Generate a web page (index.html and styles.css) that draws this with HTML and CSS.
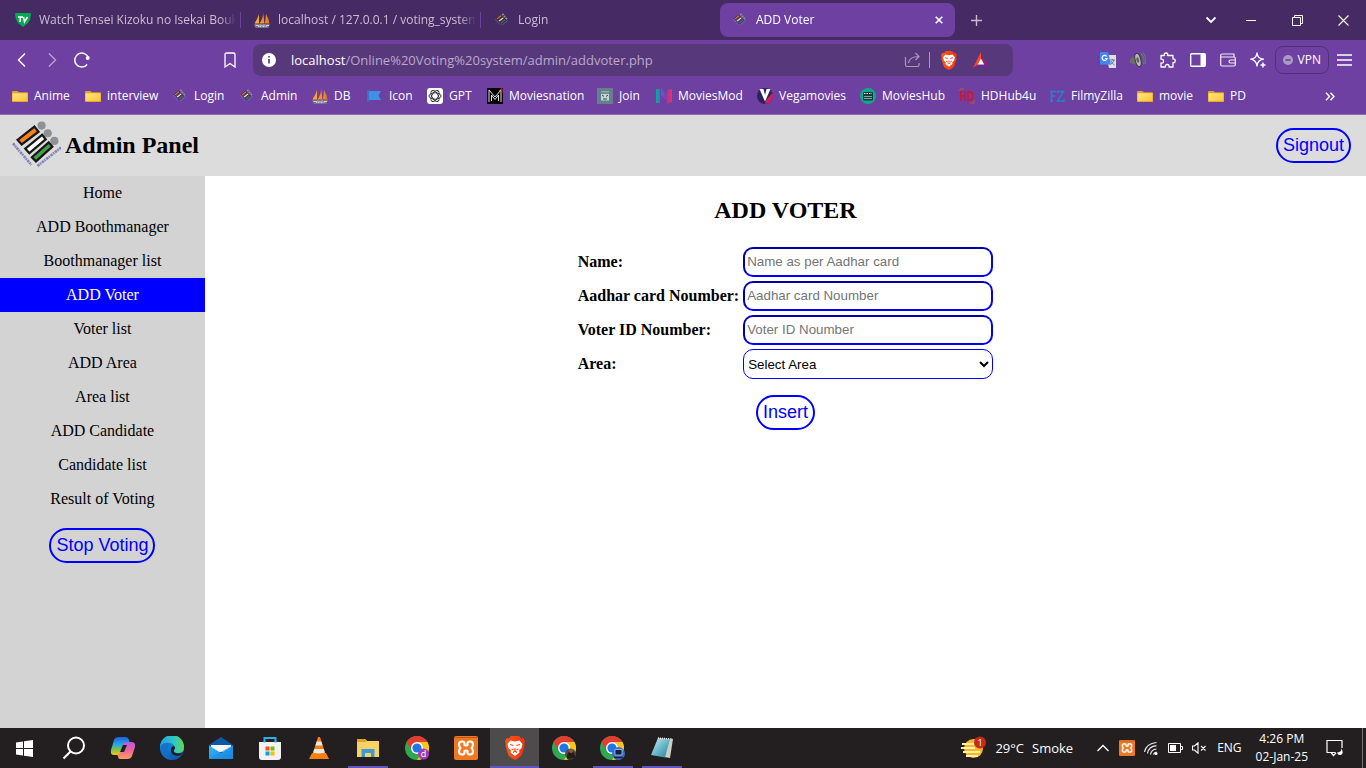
FILE: index.html
```html
<!DOCTYPE html>
<html lang="en">
<head>
<meta charset="utf-8">
<title>ADD Voter</title>
<link rel="stylesheet" href="styles.css">
</head>
<body>
<svg class="defs" aria-hidden="true">
  <defs>
    <linearGradient id="gFolder" x1="0" y1="0" x2="1" y2="1"><stop offset="0" stop-color="#ffe58a"/><stop offset="1" stop-color="#fbc632"/></linearGradient>
    <linearGradient id="gSail" x1="0" y1="0" x2="1" y2="0"><stop offset="0" stop-color="#ffb52e"/><stop offset="1" stop-color="#e8741a"/></linearGradient>
    <linearGradient id="gCopA" x1="0" y1="0" x2="0" y2="1"><stop offset="0" stop-color="#1b62dc"/><stop offset=".4" stop-color="#26a5e8"/><stop offset=".7" stop-color="#7cc344"/><stop offset="1" stop-color="#f2c51c"/></linearGradient>
    <linearGradient id="gCopB" x1="0" y1="0" x2="0" y2="1"><stop offset="0" stop-color="#b659e8"/><stop offset=".5" stop-color="#f0629a"/><stop offset="1" stop-color="#fba25c"/></linearGradient>
    <linearGradient id="gEdgeA" x1="0" y1="0" x2="1" y2="0"><stop offset="0" stop-color="#22a0e4"/><stop offset=".6" stop-color="#33c8c4"/><stop offset="1" stop-color="#5fd84c"/></linearGradient>
    <linearGradient id="gEdgeB" x1="0" y1="0" x2="0" y2="1"><stop offset="0" stop-color="#1ca0ea"/><stop offset="1" stop-color="#0f58b0"/></linearGradient>
    <linearGradient id="gLion" x1="0" y1="0" x2="1" y2="0"><stop offset="0" stop-color="#ff5a1c"/><stop offset="1" stop-color="#f6300a"/></linearGradient>
    <linearGradient id="gMail" x1="0" y1="0" x2="1" y2="1"><stop offset="0" stop-color="#35b9f5"/><stop offset="1" stop-color="#1683dc"/></linearGradient>
    <linearGradient id="gPad" x1="0" y1="0" x2="1" y2="1"><stop offset="0" stop-color="#d8f1f6"/><stop offset=".5" stop-color="#69b9cc"/><stop offset="1" stop-color="#2b7f96"/></linearGradient>
    <linearGradient id="gMod" x1="0" y1="0" x2="1" y2="0"><stop offset="0" stop-color="#0fa89a"/><stop offset=".3" stop-color="#2f78cf"/><stop offset=".6" stop-color="#8a3ab0"/><stop offset="1" stop-color="#f0305c"/></linearGradient>

    <symbol id="eci" viewBox="0 0 48 46">
      <circle cx="29" cy="4.500" r="4" fill="#8f9194"/><circle cx="35" cy="12" r="4" fill="#8f9194"/><circle cx="41.500" cy="19.500" r="4" fill="#8f9194"/>
      <g stroke="#171717" stroke-width="2.2">
        <path d="M22 5.500 26 10.500 9.500 23 5.500 18.500Z" fill="#f58220"/>
        <path d="M29.500 13.500 33 18 17 31.500 13 27Z" fill="#fff"/>
        <path d="M36 21 39.500 25 23.500 39.500 19.500 35.500Z" fill="#43a047"/>
      </g>
      <path d="M1 22 19 43M25 44 48 26" stroke="#8584bd" stroke-width="2.600" stroke-dasharray="2.500 .6 1.500 .8" fill="none"/>
    </symbol>
    <symbol id="folder" viewBox="0 0 16 14" preserveAspectRatio="none"><path d="M0 2Q0 1 1 1h4.500L7 2.500h8q1 0 1 1V12q0 1-1 1H1q-1 0-1-1Z" fill="#e3a021"/><path d="M.5 3.500h15V12H.5Z" fill="url(#gFolder)"/></symbol>
    <symbol id="pma" viewBox="0 0 16 16">
      <path d="M5 2Q3.500 7 .5 11.500H5ZM9 0Q9.500 6 5.500 11.500h5ZM12 2q3 5 3.500 9.500h-4.500Z" fill="url(#gSail)"/>
      <path d="M0 12h16l-1.500 4H1.500Z" fill="#77728c"/><path d="M1.500 13.500h3v1.500M6 12.500v2.500l2-1.500 2 1.500v-2.500M12 15v-1.500h3" stroke="#dcd9e6" fill="none" stroke-width=".9"/>
    </symbol>
    <symbol id="lion" viewBox="0 0 20 24">
      <path d="M6 0h8l2 2.500 2-.4L20 5l-.8 3 .3 2-3 9.500Q14 22 10 24 6 22 3.500 19.500L.5 10l.3-2L0 5l2-2.900 2 .4Z" fill="url(#gLion)"/>
      <path d="M5.500 4.500 10 5.500l4.500-1L17.500 8 16.500 12l-2.500 2.500.5 2L10 20l-4.500-3.500.5-2L3.500 12 2.500 8Z" fill="#fff"/>
      <path d="M5 8.500 8.500 9.500M15 8.500 11.500 9.500M6.500 13l2 1M13.500 13l-2 1M10 12v2.500M8 16.500l2-1.500 2 1.500" stroke="#f8430d" stroke-width="1.200" fill="none"/>
    </symbol>
    <symbol id="xampp" viewBox="0 0 24 24"><rect width="24" height="24" rx="2" fill="#f07820"/><path d="M1 1.500h22" stroke="#b95716"/><path d="M8 5.500q-3 0-3 3 0 2 1.500 3.500Q5 13.500 5 15.500q0 3 3 3 2.500 0 2.500-2V15q1.500-1 3 0v1.500q0 2 2.500 2 3 0 3-3 0-2-1.500-3.500Q19 10.500 19 8.500q0-3-3-3-2.500 0-2.500 2V9q-1.500 1-3 0V7.500q0-2-2.500-2Z" fill="none" stroke="#fff" stroke-width="2.200" stroke-linejoin="round"/></symbol>
    <symbol id="chrome" viewBox="0 0 24 24">
      <circle cx="12" cy="12" r="12" fill="#2da94f"/><path d="M1.600 6A12 12 0 0 1 22.400 6H12L7 15Z" fill="#e53c30"/><path d="M22.400 6A12 12 0 0 1 12 24l5.200-9L12 6Z" fill="#fcc31e"/>
      <circle cx="12" cy="12" r="6" fill="#fff"/><circle cx="12" cy="12" r="4.600" fill="#1f76e8"/>
    </symbol>
  </defs>
</svg>

<div class="screen">
  <header class="browser">
    <div class="tabstrip">
      <div class="tab">
        <svg class="fav" viewBox="0 0 16 16"><path d="M0 2q0-1 1-1h14q1 0 1 1 0 5-3 9l-5 4-5-4Q0 7 0 2Z" fill="#08a94e"/><path d="M3 5h5M5.500 5 5 10M8.500 5l1 5 3-5" stroke="#fff" stroke-width="1.500" fill="none"/></svg>
        <span class="tab-title">Watch Tensei Kizoku no Isekai Bouke</span>
      </div>
      <div class="tab split">
        <svg class="fav"><use href="#pma"/></svg>
        <span class="tab-title">localhost / 127.0.0.1 / voting_system</span>
      </div>
      <div class="tab split">
        <svg class="fav"><use href="#eci" x="1" y="1" width="13" height="13"/></svg>
        <span class="tab-title">Login</span>
      </div>
      <div class="tab active">
        <svg class="fav"><use href="#eci" x="1" y="1" width="13" height="13"/></svg>
        <span class="tab-title">ADD Voter</span>
        <button class="icon-btn close" aria-label="Close tab"><svg width="8" height="8" viewBox="0 0 8 8"><path d="m.7.7 6.600 6.600M7.300.7.7 7.300" stroke="#fff" stroke-width="1.600"/></svg></button>
      </div>
      <button class="icon-btn plus" aria-label="New tab"><svg width="11" height="11" viewBox="0 0 11 11"><path d="M5.500 0v11M0 5.500h11" stroke="#c6bcd1" stroke-width="1.400"/></svg></button>
      <div class="window-controls">
        <button class="icon-btn" aria-label="Search tabs"><svg width="12" height="8" viewBox="0 0 12 8"><path d="m1.500 1.500 4.500 4.500L10.500 1.500" stroke="#fff" stroke-width="1.800" fill="none"/></svg></button>
        <button class="icon-btn" aria-label="Minimize"><svg width="10" height="10" viewBox="0 0 10 10"><path d="M0 5.500h10" stroke="#fff"/></svg></button>
        <button class="icon-btn" aria-label="Restore"><svg width="11" height="11" viewBox="0 0 11 11"><path d="M.5 2.500h8v8h-8ZM2.500 2.500v-2h8v8h-2" stroke="#fff" fill="none"/></svg></button>
        <button class="icon-btn" aria-label="Close"><svg width="11" height="11" viewBox="0 0 11 11"><path d="m.5.5 10 10M10.500.5l-10 10" stroke="#fff" stroke-width="1.100"/></svg></button>
      </div>
    </div>

    <div class="toolbar">
      <div class="nav-buttons">
        <button class="icon-btn" aria-label="Back"><svg width="16" height="16" viewBox="0 0 16 16"><path d="M11 1.500 4.500 8l6.500 6.500" stroke="#fff" stroke-width="1.400" fill="none"/></svg></button>
        <button class="icon-btn dim" aria-label="Forward"><svg width="16" height="16" viewBox="0 0 16 16"><path d="M5 1.500 11.500 8 5 14.500" stroke="#fff" stroke-width="1.400" fill="none"/></svg></button>
        <button class="icon-btn" aria-label="Reload"><svg width="16" height="16" viewBox="0 0 16 16"><path d="M13.200 12.500A7 7 0 1 1 14.500 6" stroke="#fff" stroke-width="1.500" fill="none"/><circle cx="13.700" cy="6" r="2" fill="#fff"/></svg></button>
      </div>
      <button class="icon-btn" aria-label="Bookmark this page"><svg width="14" height="16" viewBox="0 0 14 16"><path d="M2 2.500q0-1.500 1.500-1.500h7q1.500 0 1.500 1.500V15l-5-3.500L2 15Z" stroke="#fff" stroke-width="1.300" fill="none"/></svg></button>
      <div class="urlbar">
        <svg width="14" height="14" viewBox="0 0 14 14"><circle cx="7" cy="7" r="7" fill="#fff"/><path d="M7 6v4.500M7 3v1.600" stroke="#57387b" stroke-width="1.700"/></svg>
        <a class="url" href="#"><span class="host">localhost</span>/Online%20Voting%20system/admin/addvoter.php</a>
        <svg width="17" height="16" viewBox="0 0 17 16"><path d="M1.500 5v8q0 1.500 1.500 1.500h10.500q1.500 0 1.500-1.500v-2M4.500 11Q5.500 4.500 15 4.500M11.500 1 15 4.500 11.500 8" stroke="#a997bc" stroke-width="1.200" fill="none"/></svg>
        <span class="divider"></span>
        <svg class="lion" width="16" height="19"><use href="#lion"/></svg>
        <svg class="bat" width="16" height="16" viewBox="0 0 16 16"><path d="M8 0 0 16l8-5Z" fill="#ff4724"/><path d="M8 0l8 16-5-4Z" fill="#9e1f63"/><path d="M0 16h16l-5-3.500H5Z" fill="#662d91"/><path d="M8 6.500 4.800 12.500h6.400Z" fill="#fff"/></svg>
      </div>
      <div class="extensions">
        <button class="icon-btn" aria-label="Translate"><svg width="16" height="16" viewBox="0 0 16 16"><path d="M6 3h10v13H9Z" fill="#dcdfe4"/><path d="M10 8h5M12.500 7v1M14 8q-.8 3-3.500 4.500M11 9q1 2.500 3.500 4" stroke="#6d7a82" fill="none"/><path d="M0 0h8l3 12.500H0Z" fill="#4285f4"/><path d="M6.600 4.500A2.500 2.500 0 1 0 7 6.500H5" stroke="#fff" stroke-width="1.200" fill="none"/></svg></button>
        <button class="icon-btn" aria-label="Volume booster"><svg width="16" height="16" viewBox="0 0 16 16"><path d="M0 7 3 5.500 7.500.5l3 14L4 12 0 11Z" fill="#6c706c"/><ellipse cx="8" cy="8" rx="2.800" ry="6.800" transform="rotate(-14 8 8)" fill="#b9bab8" stroke="#3b3b3b"/><ellipse cx="7.700" cy="8" rx="1.200" ry="2.800" transform="rotate(-14 8 8)" fill="#5a5a5a"/><path d="M11 1.500q4 4 2.500 11M13 .5q4 5 2 11.500" stroke="#528264" stroke-width="1.200" fill="none"/></svg></button>
        <button class="icon-btn" aria-label="Extensions"><svg width="17" height="17" viewBox="0 0 17 17"><path d="M2 3.500h3.500q-.8-2.500 1.500-2.500t1.500 2.500H14V7q2.200-.5 2.200 1.800T14 10.500V15h-4q.5-2.500-1.700-2.500T6.500 15H2v-4q2.500.4 2.500-1.800T2 7.200Z" stroke="#fff" stroke-width="1.300" fill="none" stroke-linejoin="round"/></svg></button>
        <button class="icon-btn" aria-label="Sidebar"><svg width="16" height="14" viewBox="0 0 16 14"><rect x=".7" y=".7" width="14.600" height="12.600" rx="1" stroke="#fff" stroke-width="1.400" fill="none"/><path d="M10.500 1H15v12h-4.500Z" fill="#fff"/></svg></button>
        <button class="icon-btn" aria-label="Wallet"><svg width="16" height="14" viewBox="0 0 16 14"><path d="M14 4V1H2Q.7 1 .7 2.500v9Q.7 13 2 13h12q1.300 0 1.300-1.500V5.500Q15.300 4 14 4H1M15 7h-4.500q-1.500 0-1.500 1.500T10.500 10H15" stroke="#f3edf8" stroke-width="1.200" fill="none"/></svg></button>
        <button class="icon-btn" aria-label="Leo AI"><svg width="16" height="16" viewBox="0 0 16 16"><path d="M7 1Q7.500 6.500 13.500 7.200 7.500 8 7 14 6 8 .8 7.200 6.500 6.500 7 1Z" stroke="#fff" stroke-width="1.300" fill="none" stroke-linejoin="round"/><path d="M13 10.500v5M10.500 13h5" stroke="#fff" stroke-width="1.500"/></svg></button>
      </div>
      <button class="vpn"><svg width="10" height="10" viewBox="0 0 10 10"><circle cx="5" cy="5" r="5" fill="#a99bc4"/><path d="M2.500 5h5" stroke="#5b3a86" stroke-width="1.400"/></svg>VPN</button>
      <button class="icon-btn menu" aria-label="Menu"><svg width="15" height="12" viewBox="0 0 15 12"><path d="M0 1h15M0 6h15M0 11h15" stroke="#fff" stroke-width="1.300"/></svg></button>
    </div>

    <nav class="bookmarks" aria-label="Bookmarks">
      <a href="#"><svg class="fav"><use href="#folder" y="2" width="16" height="13"/></svg>Anime</a>
      <a href="#"><svg class="fav"><use href="#folder" y="2" width="16" height="13"/></svg>interview</a>
      <a href="#"><svg class="fav"><use href="#eci" x="1" y="1" width="13" height="13"/></svg>Login</a>
      <a href="#"><svg class="fav"><use href="#eci" x="1" y="1" width="13" height="13"/></svg>Admin</a>
      <a href="#"><svg class="fav"><use href="#pma"/></svg>DB</a>
      <a href="#"><svg class="fav" viewBox="0 0 16 16"><path d="M1 2v12" stroke="#2f7fd0" stroke-width="1.500"/><path d="M2 3h12l-2.500 4.500L14 12H2Z" fill="#3d92e6"/></svg>Icon</a>
      <a href="#"><svg class="fav" viewBox="0 0 16 16"><rect width="16" height="16" rx="3" fill="#fff"/><g fill="none" stroke="#333"><ellipse cx="8" cy="8" rx="6" ry="3.200"/><ellipse cx="8" cy="8" rx="6" ry="3.200" transform="rotate(60 8 8)"/><ellipse cx="8" cy="8" rx="6" ry="3.200" transform="rotate(120 8 8)"/></g></svg>GPT</a>
      <a href="#"><svg class="fav" viewBox="0 0 16 16"><rect width="16" height="16" fill="#050505"/><path d="M2 14V2l6 7 6-7v12M4.500 13V7L8 11.500 11.500 7v6" stroke="#ddd" fill="none"/><path d="m12 3 3-2.500V5" stroke="#d12a2a" fill="none"/></svg>Moviesnation</a>
      <a href="#"><svg class="fav" viewBox="0 0 16 16"><rect width="16" height="16" fill="#64808b"/><path d="M4 3.500h8v9H4Z" fill="#c4d5d6"/><path d="M4 5h8M5 7l2 1.500M11 7 9 8.500M6 11h4" stroke="#2d4852"/></svg>Join</a>
      <a href="#"><svg class="fav" viewBox="0 0 16 16"><path d="M0 1h4v14H0ZM5 0l6 7v6L5 7ZM11 2l5-1v13l-5 2Z" fill="url(#gMod)"/></svg>MoviesMod</a>
      <a href="#"><svg class="fav" viewBox="0 0 16 16"><circle cx="8" cy="8" r="8" fill="#30205f"/><path d="M8 16A8 8 0 0 0 15.500 5L9 12Z" fill="#c32263"/><path d="M2.500 1 8 13.500 13.500 1h-4L8 7 6.500 1Z" fill="#fff"/></svg>Vegamovies</a>
      <a href="#"><svg class="fav" viewBox="0 0 16 16"><circle cx="8" cy="8" r="8" fill="#0ca98b"/><rect x="3" y="4" width="10" height="8.500" rx="1" fill="#163b38"/><path d="M4 5.500h8" stroke="#fff" stroke-dasharray="1.500 1"/><path d="M4 8.500h8M4 10.500h8" stroke="#95c5bd" stroke-width=".8"/></svg>MoviesHub</a>
      <a href="#"><svg class="fav" viewBox="0 0 16 16"><path d="M1 3V1h4M11 15h4v-3" stroke="#c3542f" fill="none"/><path d="M2 3v10M2 8h4M6 3v10M9 3v10M9 4q5-.5 5 4t-5 4" stroke="#d5122d" stroke-width="1.700" fill="none"/></svg>HDHub4u</a>
      <a href="#"><svg class="fav" viewBox="0 0 16 16"><path d="M1 3.500h6M2.500 3v10M2.500 8H6M1 13h3M8.500 5V3.500h6L8.500 13H15v-2" stroke="#2482d6" stroke-width="1.400" fill="none"/></svg>FilmyZilla</a>
      <a href="#"><svg class="fav"><use href="#folder" y="2" width="16" height="13"/></svg>movie</a>
      <a href="#"><svg class="fav"><use href="#folder" y="2" width="16" height="13"/></svg>PD</a>
      <button class="icon-btn more" aria-label="More bookmarks"><svg width="10" height="9" viewBox="0 0 10 9"><path d="M1 .8 4.500 4.500 1 8.200M5.500.8 9 4.500 5.500 8.200" stroke="#fff" stroke-width="1.400" fill="none"/></svg></button>
    </nav>
  </header>

  <div class="page">
    <div class="page-header">
      <div class="brand">
        <svg class="logo" viewBox="0 0 48 46"><use href="#eci"/></svg>
        <h1>Admin Panel</h1>
      </div>
      <button class="pill">Signout</button>
    </div>
    <div class="page-body">
      <nav class="sidebar" aria-label="Admin">
        <a href="#">Home</a>
        <a href="#">ADD Boothmanager</a>
        <a href="#">Boothmanager list</a>
        <a href="#" class="current">ADD Voter</a>
        <a href="#">Voter list</a>
        <a href="#">ADD Area</a>
        <a href="#">Area list</a>
        <a href="#">ADD Candidate</a>
        <a href="#">Candidate list</a>
        <a href="#">Result of Voting</a>
        <button class="pill">Stop Voting</button>
      </nav>
      <main class="content">
        <h2>ADD VOTER</h2>
        <form class="voter-form">
          <div class="fields">
            <label for="name">Name:</label>
            <input id="name" type="text" placeholder="Name as per Aadhar card">
            <label for="aadhar">Aadhar card Noumber:</label>
            <input id="aadhar" type="text" placeholder="Aadhar card Noumber">
            <label for="voterid">Voter ID Noumber:</label>
            <input id="voterid" type="text" placeholder="Voter ID Noumber">
            <label for="area">Area:</label>
            <select id="area"><option>Select Area</option></select>
          </div>
          <button class="pill" type="button">Insert</button>
        </form>
      </main>
    </div>
  </div>

  <footer class="taskbar">
    <div class="apps">
      <button class="app" aria-label="Start"><svg width="17" height="17" viewBox="0 0 17 17"><path d="M0 2.500 7 1.500V8H0ZM8 1.300 17 0v8H8ZM0 9h7v6.500l-7-1ZM8 9h9v8L8 15.700Z" fill="#fff"/></svg></button>
      <button class="app" aria-label="Search"><svg width="24" height="24" viewBox="0 0 24 24"><circle cx="14" cy="9.500" r="8" stroke="#fff" stroke-width="2" fill="none"/><path d="m8.500 15.500-7 7" stroke="#fff" stroke-width="2.200"/></svg></button>
      <button class="app" aria-label="Copilot"><svg width="26" height="24" viewBox="0 0 26 24"><path d="M9 1h7q2 0 3 3l1 3h-4q-2 0-3 3l-2 7q-1 2-3 2H4q-4 0-3-5L4 4q1-3 5-3Z" fill="url(#gCopA)"/><path d="M17 23h-7q-2 0-2-3l-1-1q3 0 4-3l2-7q1-3 3-3h5q5 0 4 5l-3 9q-1 3-5 3Z" fill="url(#gCopB)"/><path d="m13 9 4 0-3 7-4 0Z" fill="#231f20"/></svg></button>
      <button class="app" aria-label="Edge"><svg width="24" height="24" viewBox="0 0 24 24"><circle cx="12" cy="12" r="12" fill="url(#gEdgeB)"/><path d="M0 11A12 12 0 0 1 24 11q0 6-6 6-5 0-4-3 2-3-1-6Q6 4 0 11Z" fill="url(#gEdgeA)"/><path d="M14 10q2 2 0 4-1 3 4 3.500 3 .2 5-1.500-1 4-6 4-7-1-6-7 .5-3 3-3Z" fill="#231f20"/><path d="M1 9q5-4 11 0-5 1-5 7 1 5 6 8Q-1 23 1 9Z" fill="#1270c6" opacity=".75"/></svg></button>
      <button class="app" aria-label="Mail"><svg width="24" height="24" viewBox="0 0 24 24"><path d="M0 9 12 1l12 8v2H0Z" fill="#0b5aa8"/><path d="M2 9h20v7H2Z" fill="#f5f7fa"/><path d="M0 9.500 12 17l12-7.500V23H0Z" fill="url(#gMail)"/><path d="M0 23 12 15.500 24 9.500V23Z" fill="#1b8fe4" opacity=".45"/></svg></button>
      <button class="app" aria-label="Store"><svg width="24" height="24" viewBox="0 0 24 24"><path d="M6.500 8V2h11v6" stroke="#2bb0e5" stroke-width="2" fill="none"/><path d="M1 6h22v15q0 3-3 3H4q-3 0-3-3Z" fill="#f2f2f2"/><path d="M6.500 6.500V5M17.500 6.500V5" stroke="#2bb0e5" stroke-width="2"/><path d="M7.500 10.500h4v4h-4Z" fill="#f25022"/><path d="M12.500 10.500h4v4h-4Z" fill="#7fba00"/><path d="M7.500 15.500h4v4h-4Z" fill="#00a4ef"/><path d="M12.500 15.500h4v4h-4Z" fill="#ffb900"/></svg></button>
      <button class="app" aria-label="VLC"><svg width="22" height="24" viewBox="0 0 22 24"><path d="M4 17h14l3 6H1Z" fill="#f58010"/><path d="M10 1h2l6 19q-7 3-14 0Z" fill="#f58010"/><path d="M8.700 5.500h4.600l1.300 4H7.400ZM6.300 13h9.400l1.200 3.500q-6 2-11.800 0Z" fill="#e9e9e9"/></svg></button>
      <button class="app open" aria-label="File Explorer"><svg width="22" height="20" viewBox="0 0 22 20"><path d="M0 1h8l2 2h12v16H0Z" fill="#fad264"/><path d="M0 1h8l2 2-2 1H0Z" fill="#e2a41e"/><path d="M4.500 11h13v8h-3.500v-4H8v4H4.500Z" fill="#3a98dc"/></svg></button>
      <button class="app" aria-label="Chrome profile d"><svg width="24" height="24" viewBox="0 0 24 24"><use href="#chrome"/><circle cx="18.500" cy="18" r="5.500" fill="#a23cb8"/><text class="badge-letter" x="18.500" y="21" text-anchor="middle">d</text></svg></button>
      <button class="app" aria-label="XAMPP"><svg width="24" height="24"><use href="#xampp"/></svg></button>
      <button class="app focused" aria-label="Brave"><svg width="20" height="24"><use href="#lion"/></svg></button>
      <button class="app" aria-label="Chrome second profile"><svg width="24" height="24" viewBox="0 0 24 24"><use href="#chrome"/><circle cx="18.500" cy="18" r="5.500" fill="#5a4832"/><path d="M15 23q0-8 4-8t4 7" fill="#241c16"/><circle cx="19" cy="15" r="2" fill="#76624b"/></svg></button>
      <button class="app open" aria-label="Chrome third profile"><svg width="26" height="24" viewBox="0 0 26 24"><use href="#chrome" width="24" height="24"/><circle cx="18.500" cy="17.500" r="6.500" fill="#3a6fd0"/><path d="M15 13.500h7v5.500h-7Z" fill="#122038" stroke="#b9c4d4" stroke-width=".8"/><path d="M14 21.500h9" stroke="#122038" stroke-width="1.500"/></svg></button>
      <button class="app open" aria-label="Notepad"><svg width="24" height="24" viewBox="0 0 24 24"><path d="m20 2 3 1-3 19-6-1Z" fill="#c9cfc4"/><path d="M8 2 20 3l-5 18.500L1 19Z" fill="url(#gPad)"/><path d="m8 2 12 1" stroke="#eee" stroke-width="1.500" stroke-dasharray="1 1"/></svg></button>
    </div>
    <div class="tray">
      <button class="weather"><svg width="26" height="24" viewBox="0 0 26 24"><circle cx="12.500" cy="12.500" r="9.500" fill="#f9b824"/><path d="M1 8h15M0 12h14M2 16h17M5 20h12" stroke="#fff0b0" stroke-width="1.800"/><circle cx="19" cy="6.500" r="6" fill="#c42b1c"/><text class="badge-num" x="19" y="10" text-anchor="middle">1</text></svg><span>29°C</span><span>Smoke</span></button>
      <button class="icon-btn" aria-label="Show hidden icons"><svg width="12" height="8" viewBox="0 0 12 8"><path d="m.5 7 5.500-5.500L11.500 7" stroke="#fff" stroke-width="1.300" fill="none"/></svg></button>
      <button class="icon-btn" aria-label="XAMPP control"><svg width="16" height="16"><use href="#xampp"/></svg></button>
      <button class="icon-btn" aria-label="Wi-Fi"><svg width="14" height="14" viewBox="0 0 14 14"><path d="M.5 11Q2 2.500 12.500 1.500M3.500 12.500Q4.500 5.500 12.500 4.700M6.500 13.500q.8-5 6-5.500M9.500 13.500q.5-2 3-2.500" stroke="#e8e8e8" stroke-width="1.200" fill="none"/><circle cx="12" cy="12.500" r="1.500" fill="#fff"/></svg></button>
      <button class="icon-btn" aria-label="Battery"><svg width="15" height="10" viewBox="0 0 15 10"><path d="M.5.500h12v9H.5ZM13 3.500h1.500v3H13" stroke="#fff" fill="none"/><path d="M2 2h6v6H2Z" fill="#fff"/></svg></button>
      <button class="icon-btn" aria-label="Muted"><svg width="15" height="12" viewBox="0 0 15 12"><path d="M.5 4h2L6 .8v10.400L2.500 8h-2ZM9 4l4.500 4.500M13.500 4 9 8.500" stroke="#fff" fill="none" stroke-width="1.100"/></svg></button>
      <button class="lang">ENG</button>
      <button class="clock"><span>4:26 PM</span><span>02-Jan-25</span></button>
      <button class="icon-btn notify" aria-label="Notifications"><svg width="18" height="18" viewBox="0 0 18 18"><path d="M9.500 13.500H4.500l-3.500-.1V1.500h15V9M5 13.500 7.500 16.500 10 14" stroke="#fff" stroke-width="1.200" fill="none"/><path d="M15 9q1.500 3.500-4 4.500.5 3 4 2.500 3.500-2 0-7Z" fill="#fff"/></svg></button>
    </div>
  </footer>
</div>
</body>
</html>
```
FILE: styles.css
```css
* { box-sizing: border-box; }

body {
  margin: 0;
  font-family: "Liberation Serif", "Times New Roman", serif;
  font-size: 16px;
  color: #000;
}

button { font: inherit; color: inherit; margin: 0; }
a { color: inherit; text-decoration: none; }
svg { display: block; flex: none; }

.defs { position: absolute; width: 0; height: 0; }

.screen {
  min-height: 100vh;
  display: flex;
  flex-direction: column;
}

/* Browser frame */
.browser {
  background: #6e40a2;
  border-bottom: 1px solid #8f6ab9;
  color: #fff;
  font: 12px/16px "Open Sans", "Segoe UI", sans-serif;
}

.icon-btn {
  display: flex;
  align-items: center;
  justify-content: center;
  width: 30px;
  height: 32px;
  padding: 0;
  border: 0;
  background: none;
}

.fav { width: 16px; height: 16px; }

.tabstrip {
  display: grid;
  grid-template-columns: repeat(3, 240px) 235px 42px 1fr;
  align-items: center;
  height: 40px;
  background: #452a64;
}

.tab {
  display: flex;
  align-items: center;
  gap: 8px;
  height: 34px;
  padding: 0 4px 0 15px;
  color: #c9bed4;
}

.tab.split { background: linear-gradient(#6e40a2, #6e40a2) 0 50% / 1px 16px no-repeat; padding-left: 14px; }
.tab.active { background: #6e40a2; color: #fff; border-radius: 8px; padding: 0 1px 0 12px; }
.plus { justify-self: center; }

.tab-title {
  flex: 1;
  overflow: hidden;
  white-space: nowrap;
  mask-image: linear-gradient(to right, #000 calc(100% - 16px), transparent);
}

.window-controls { display: flex; justify-content: flex-end; }
.window-controls .icon-btn { width: 46px; }
.window-controls .icon-btn:first-child { width: 34px; }

.toolbar {
  display: flex;
  align-items: center;
  height: 40px;
  padding: 0 7px;
}

.nav-buttons { display: flex; margin-right: 118px; }
.dim { opacity: .5; }

.urlbar {
  flex: 1;
  display: flex;
  align-items: center;
  height: 32px;
  margin: 0 80px 0 8px;
  padding: 0 24px 0 9px;
  background: #57387b;
  border-radius: 8px;
}

.url {
  flex: 1;
  padding-left: 15px;
  font-size: 13px;
  line-height: 20px;
  color: #b9a9cb;
}

.host { color: #fff; }
.divider { width: 1px; height: 16px; margin: 0 11px 0 8px; background: #a997bc; }
.bat { margin-left: 16px; }
.extensions { display: flex; }

.vpn {
  display: flex;
  align-items: center;
  gap: 5px;
  height: 28px;
  margin-left: 2px;
  padding: 0 7px;
  border: 1px solid #51307a;
  border-radius: 8px;
  background: none;
}

.bookmarks {
  display: grid;
  grid-template-columns: 73px 87px 67px 73px 55px 60px 60px 110px 59px 101px 103px 99px 90px 88px 71px 1fr 40px;
  align-items: center;
  height: 34px;
  padding: 0 11px 6px 12px;
}

.bookmarks a { display: flex; align-items: center; gap: 6px; white-space: nowrap; }

/* Admin page */
.page { flex: 1; display: flex; flex-direction: column; }

.page-header {
  display: flex;
  align-items: center;
  justify-content: space-between;
  padding: 5px 15px 5px 12px;
  background: gainsboro;
}

.brand { display: flex; align-items: center; gap: 4px; padding-bottom: 2px; }
.logo { width: 49px; height: 49px; }
h1, h2 { font-size: 24px; line-height: 28px; }
h1 { margin: 0; }
h2 { margin: 20px 0; }

.pill {
  padding: 5px;
  border: 2px solid #00f;
  border-radius: 20px;
  background: none;
  color: #00f;
  font: 18px/21px "Liberation Sans", Arial, sans-serif;
}

.page-body { flex: 1; display: flex; }

.sidebar {
  width: 15%;
  background: lightgray;
  display: flex;
  flex-direction: column;
  text-align: center;
}

.sidebar a { padding: 8px; line-height: 18px; }
.sidebar .current { background: #00f; color: #fff; }
.sidebar .pill { align-self: center; margin-top: 12px; }

.content { flex: 1; background: #fff; text-align: center; }

.voter-form {
  display: flex;
  flex-direction: column;
  align-items: center;
  gap: 16px;
  padding-top: 3px;
}

.fields {
  display: grid;
  grid-template-columns: auto 250px;
  gap: 4px;
  align-items: center;
  text-align: left;
}

.fields label { font-weight: bold; }

.fields input,
.fields select {
  width: 100%;
  height: 30px;
  border-radius: 10px;
  background: #fff;
  font-family: "Liberation Sans", Arial, sans-serif;
}

.fields input { padding: 0 2px 2px; border: 2px inset #00f; }
.fields select { padding: 0; border: 1px solid #00f; color: #000; }

/* Taskbar */
.taskbar {
  display: flex;
  justify-content: space-between;
  height: 40px;
  padding-right: 3px;
  background: #231f20;
  color: #fff;
  font: 12px/18px "Open Sans", "Segoe UI", sans-serif;
}

.apps, .tray { display: flex; align-items: center; }

.app {
  display: flex;
  align-items: center;
  justify-content: center;
  width: 49px;
  height: 40px;
  padding: 0;
  border: 0;
  background: none;
}

.app.open { background: linear-gradient(#5f55bd, #5f55bd) 50% 100% / 40px 2px no-repeat; }
.app.focused { background: linear-gradient(#5f55bd, #5f55bd) 50% 100% / 49px 2px no-repeat #4d4b4c; }

.badge-letter, .badge-num { font: 9px "Open Sans", sans-serif; fill: #fff; }

.tray { border-right: 1px solid #77757a; }
.tray .icon-btn { width: 24px; height: 40px; }

.weather, .lang, .clock {
  display: flex;
  align-items: center;
  height: 40px;
  padding: 0;
  border: 0;
  background: none;
}

.weather { gap: 8px; margin-right: 18px; font-size: 13px; }
.lang { margin: 0 14px 0 6px; }
.clock { flex-direction: column; justify-content: center; }
.tray .notify { width: 54px; }
```
